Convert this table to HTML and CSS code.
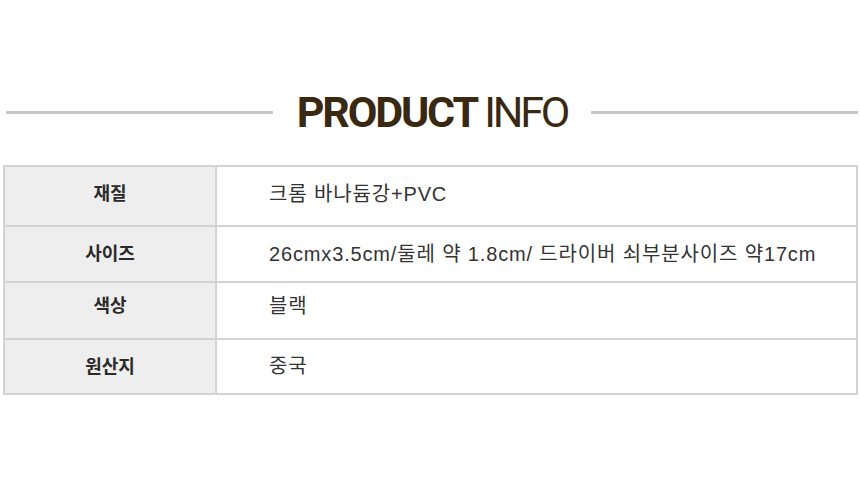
FILE: index.html
```html
<!DOCTYPE html>
<html lang="ko">
<head>
<meta charset="utf-8">
<link rel="stylesheet" href="styles.css">
</head>
<body>
<div class="page">
  <div class="heading">
    <span class="rule"></span>
    <h1 class="title"><b>PRODUCT</b> <span class="light">INFO</span></h1>
    <span class="rule"></span>
  </div>
  <table class="info">
    <tr class="r1"><th>재질</th><td>크롬 바나듐강+PVC</td></tr>
    <tr class="r2"><th>사이즈</th><td>26cmx3.5cm/둘레 약 1.8cm/ 드라이버 쇠부분사이즈 약17cm</td></tr>
    <tr class="r3"><th>색상</th><td>블랙</td></tr>
    <tr class="r4"><th>원산지</th><td>중국</td></tr>
  </table>
</div>
</body>
</html>
```
FILE: styles.css
```css
html, body {
  margin: 0;
  padding: 0;
  background: #fff;
}
.page {
  width: 860px;
  height: 500px;
  padding-top: 88px;
  box-sizing: border-box;
}
.heading {
  display: flex;
  align-items: center;
  gap: 24px;
  padding: 0 2px 0 6px;
  height: 48px;
}
.rule {
  flex: 1;
  height: 3px;
  background: #c6c6c6;
}
.title {
  margin: 0;
  font-family: Roboto, "Liberation Sans", sans-serif;
  font-size: 43px;
  line-height: 48px;
  color: #3a2811;
  letter-spacing: -2.2px;
  white-space: nowrap;
}
.title b {
  font-weight: 700;
}
.title .light {
  font-weight: 400;
  letter-spacing: -3.2px;
}
.info {
  margin: 29px 0 0 3px;
  width: 855px;
  border-collapse: collapse;
  font-family: "Liberation Sans", "Noto Sans CJK KR", sans-serif;
  font-size: 20px;
}
.info th, .info td {
  border: 2px solid #d3d3d3;
  padding: 0 0 4px;
}
.info th {
  width: 210px;
  background: #eeeeee;
  font-family: "Noto Sans CJK KR", sans-serif;
  font-size: 18px;
  font-weight: 700;
  color: #2a2a2a;
  text-align: center;
}
.info td {
  padding-left: 52px;
  color: #333;
  text-align: left;
  font-weight: 400;
  letter-spacing: 0.85px;
}
.r1 { height: 60px; }
.r1 th, .r1 td { padding-bottom: 8px; }
.r2 { height: 56px; }
.r3 { height: 57px; }
.r3 th, .r3 td { padding-bottom: 13px; }
.r4 { height: 55px; }
```
